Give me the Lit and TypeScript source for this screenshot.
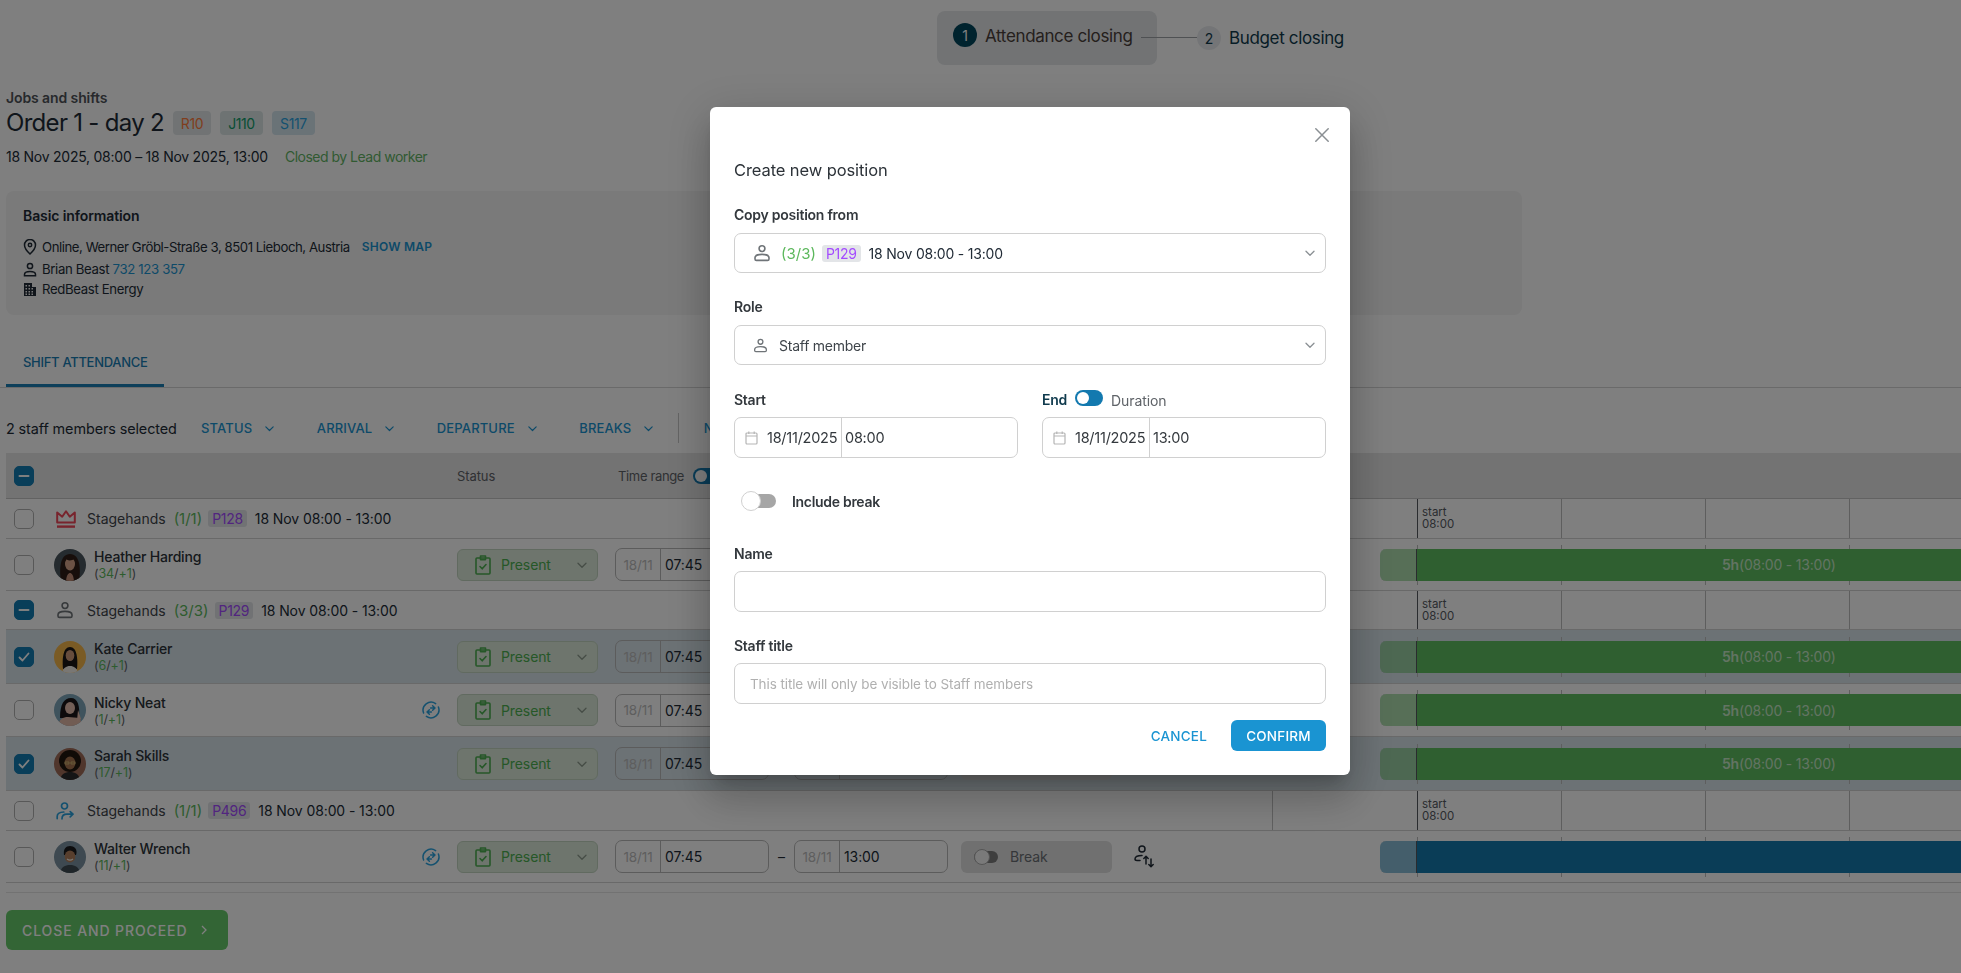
import { LitElement, html, svg, css, nothing } from 'lit';
import { customElement } from 'lit/decorators.js';
import { classMap } from 'lit/directives/class-map.js';

const chevron = (size = 12, color = 'currentColor') => html`
  <svg width=${size} height=${size} viewBox="0 0 12 12" fill="none" stroke=${color} stroke-width="1.3" stroke-linecap="round" stroke-linejoin="round"><path d="M2 4.2 6 8.2l4-4" /></svg>`;

const personIcon = (size = 18, color = '#6f7478') => html`
  <svg width=${size} height=${size} viewBox="0 0 18 18" fill="none" stroke=${color} stroke-width="1.6">
    <circle cx="9" cy="4.6" r="2.9" />
    <path d="M2 15v-1.2c0-2.2 3.2-3.4 7-3.4s7 1.2 7 3.4V15a1.4 1.4 0 0 1-1.4 1.4H3.4A1.4 1.4 0 0 1 2 15z" />
  </svg>`;

const crownIcon = () => html`
  <svg width="20" height="18" viewBox="0 0 20 18" fill="none" stroke="#f0485a" stroke-width="2" stroke-linejoin="round">
    <path d="M1.2 2.5V12.6h17.6V2.5l-5 4.2L10 1.2 6.200 6.700z" />
    <path d="M1 16.600h18" stroke-width="2.400" />
  </svg>`;

const assignedIcon = () => html`
  <svg width="18" height="18" viewBox="0 0 18 18" fill="none" stroke="#2aa3df" stroke-width="1.7" stroke-linecap="round" stroke-linejoin="round">
    <circle cx="8.5" cy="4" r="3" />
    <path d="M1.2 16.6v-2.4c0-2.6 2.6-4 6.6-4.2" />
    <path d="M6 16.8c0-3 2-4.6 5-4.6h5.6M14.2 9.6l2.8 2.6-2.8 2.6" />
  </svg>`;

const swapIcon = () => html`
  <svg width="18" height="18" viewBox="0 0 18 18" fill="none" stroke="#2aa3df" stroke-width="1.5" stroke-linecap="round" stroke-linejoin="round">
    <path d="M13.6 2.6A8 8 0 0 0 1.6 12M4.4 15.4a8 8 0 0 0 12-9.4" />
    <path d="M10.6 4.8 13 7l-2.4 2.2M13 7H8.6" />
    <path d="M7.4 8.8 5 11l2.4 2.2M5 11h4.4" />
  </svg>`;

const clipboardIcon = () => html`
  <svg width="16" height="20" viewBox="0 0 16 20" fill="none" stroke="#4caf50" stroke-width="1.6" stroke-linejoin="round" stroke-linecap="round">
    <rect x="1" y="3" width="14" height="16" rx="1" />
    <path d="M5.5 1h5v3.600h-5z" />
    <path d="m5 11.500 2.200 2.300L11 9.500" />
  </svg>`;

const calendarIcon = () => html`
  <svg width="13" height="14" viewBox="0 0 13 14" fill="none" stroke="#b5b5b5" stroke-width="1.2">
    <rect x="1" y="2" width="11" height="11" rx="1" />
    <path d="M1 5h11M3.8 .6v2.4M9.2 .6v2.4" />
  </svg>`;

const pinIcon = () => html`
  <svg width="14" height="16" viewBox="0 0 14 16" fill="none" stroke="#212b36" stroke-width="1.5">
    <path d="M7 15s5.5-5 5.5-9a5.500 5.500 0 0 0-11 0c0 4 5.500 9 5.500 9z" />
    <circle cx="7" cy="6" r="1.7" />
  </svg>`;

const contactIcon = () => html`
  <svg width="14" height="15" viewBox="0 0 14 15" fill="none" stroke="#212b36" stroke-width="1.5">
    <circle cx="7" cy="4" r="2.6" />
    <path d="M1.500 12.500c0-2 2.500-3 5.500-3s5.500 1 5.500 3v1.200h-11z" />
  </svg>`;

const buildingIcon = () => html`
  <svg width="14" height="14" viewBox="0 0 14 14" fill="#212b36">
    <path d="M1 1h8v4h4v9H1zM2.500 3v1.500H4V3zm3 0v1.500H7V3zm-3 3v1.500H4V6zm3 0v1.500H7V6zm3 0v1.500H10V6zm-6 3v1.500H4V9zm3 0v1.500H7V9zm3 0v1.500H10V9zm-6 2.500V13H4v-1.500zm3 0V13H7v-1.500zm3 0V13H10v-1.500z" fill-rule="evenodd" />
  </svg>`;

const moveIcon = () => html`
  <svg width="22" height="23" viewBox="0 0 22 23" fill="none" stroke="#212b36" stroke-width="1.5" stroke-linecap="round" stroke-linejoin="round">
    <circle cx="9" cy="4" r="3" />
    <path d="M9 10.500c-4.500 0-7 1-7 3.500 0 1.200.8 1.500 2 1.500h3" />
    <path d="M13 19v-7.500M10.800 13.500l2.200-2.200 2.200 2.200" />
    <path d="M18 14v7.500M15.800 19.500l2.200 2.200 2.200-2.200" />
  </svg>`;

const closeIcon = () => html`
  <svg width="14" height="14" viewBox="0 0 14 14" fill="none" stroke="#8a8f93" stroke-width="1.5" stroke-linecap="round"><path d="M.8.8l12.400 12.400M13.200.8.800 13.200" /></svg>`;

type AvatarKind = 'heather' | 'kate' | 'nicky' | 'sarah' | 'walter';

const avatar = (kind: AvatarKind) => {
  const parts = {
    heather: svg`
      <rect width="32" height="32" fill="#4a565e" />
      <path d="M7 32C5 20 6 5 16 5s11 15 9 27z" fill="#2e1d17" />
      <ellipse cx="16" cy="15" rx="5" ry="6.500" fill="#d8a58a" />
      <path d="M11 9c2 3 6 3 10 1l-1-3h-7z" fill="#2e1d17" />
      <path d="M12 32c.5-6 2.500-8 4-8s3.500 2 4 8z" fill="#c58f78" />`,
    kate: svg`
      <rect width="32" height="32" fill="#f4b64a" />
      <path d="M9 28c-1-10 0-22 7-22s8 12 7 22z" fill="#1b1614" />
      <ellipse cx="16" cy="14.500" rx="4.300" ry="5.500" fill="#cf9a7a" />
      <path d="M8 32c1-5 4-7 8-7s7 2 8 7z" fill="#f2efe9" />`,
    nicky: svg`
      <rect width="32" height="32" fill="#7ea6bb" />
      <path d="M6 24C6 10 10 4 17 4s9 8 8 20z" fill="#1a1517" />
      <ellipse cx="16" cy="14" rx="5" ry="6" fill="#e7bfae" />
      <path d="M4 32c1-7 5-9 10-9l12 1 2 8z" fill="#e3b8a6" />
      <path d="M24 16l3 9-4 2z" fill="#e7bfae" />`,
    sarah: svg`
      <rect width="32" height="32" fill="#a06c58" />
      <circle cx="16" cy="13" r="11" fill="#20160f" />
      <ellipse cx="16" cy="15" rx="5.500" ry="6.500" fill="#a5724f" />
      <path d="M11 14h4v2h-4zM17 14h4v2h-4z" fill="none" stroke="#d6c27a" stroke-width=".8" />
      <path d="M6 32c1-6 5-8 10-8s9 2 10 8z" fill="#2b2a2d" />`,
    walter: svg`
      <rect width="32" height="32" fill="#7c93a2" />
      <path d="M10 14c-1-6 2-9 6-9s8 3 6 9z" fill="#1b1a1d" />
      <ellipse cx="16" cy="15.500" rx="5.300" ry="6" fill="#b07f5d" />
      <path d="M13 18c2 1.500 4 1.500 6 0" stroke="#f5efe8" stroke-width="1.200" fill="none" />
      <path d="M6 32c1-6 5-8 10-8s9 2 10 8z" fill="#3e4a52" />`,
  };
  return html`<svg class="avatar" width="32" height="32" viewBox="0 0 32 32">${parts[kind]}</svg>`;
};

type Group = { type: 'group'; h: number; icon: 'crown' | 'person' | 'assigned'; count: string; code: string; check: string };
type Person = { type: 'person'; h: number; name: string; done: string; extra: string; av: AvatarKind; check: string; swap?: boolean; blue?: boolean };

const rows: (Group | Person)[] = [
  { type: 'group', h: 40, icon: 'crown', count: '(1/1)', code: 'P128', check: 'off' },
  { type: 'person', h: 52, name: 'Heather Harding', done: '34', extra: '+1', av: 'heather', check: 'off' },
  { type: 'group', h: 39, icon: 'person', count: '(3/3)', code: 'P129', check: 'some' },
  { type: 'person', h: 54, name: 'Kate Carrier', done: '6', extra: '+1', av: 'kate', check: 'on' },
  { type: 'person', h: 53, name: 'Nicky Neat', done: '1', extra: '+1', av: 'nicky', check: 'off', swap: true },
  { type: 'person', h: 54, name: 'Sarah Skills', done: '17', extra: '+1', av: 'sarah', check: 'on' },
  { type: 'group', h: 40, icon: 'assigned', count: '(1/1)', code: 'P496', check: 'off' },
  { type: 'person', h: 52, name: 'Walter Wrench', done: '11', extra: '+1', av: 'walter', check: 'off', swap: true, blue: true },
];

@customElement('app-root')
export class AppRoot extends LitElement {
  static styles = css`
    :host {
      display: block;
      height: 973px;
      overflow: hidden;
      background: #fff;
      color: #212b36;
      font-family: Inter, "Noto Sans", sans-serif;
      font-size: 14px;
      letter-spacing: -0.1px;
    }
    svg { flex: none; display: block; }

    .stepper { display: flex; align-items: flex-start; padding: 11px 0 0 937px; height: 54px; }
    .step-on {
      display: flex; align-items: flex-start; gap: 8px; width: 220px; height: 54px;
      padding: 12px 16px; box-sizing: border-box; border-radius: 8px; background: #e4e6e9;
    }
    .num {
      width: 24px; height: 24px; border-radius: 50%; flex: none;
      display: flex; align-items: center; justify-content: center; font-size: 14px;
    }
    .step-on .num { background: #00465c; color: #fff; }
    .step-label { font-size: 17px; line-height: 24px; letter-spacing: -0.35px; }
    .step-on .step-label { color: #4a3f3a; padding-top: 1px; }
    .step-line { width: 56px; height: 1px; background: #9ea3a7; margin: 26px 0 0 -16px; }
    .step-off { display: flex; align-items: center; gap: 8px; margin-top: 15px; }
    .step-off .num { background: #e9ebee; color: #0f3a4d; }
    .step-off .step-label { color: #0f3a4d; }

    .head { padding: 24px 0 0 6px; }
    .crumb { font-weight: 600; line-height: 18px; color: #4f5358; }
    .title-row { display: flex; align-items: center; height: 30px; margin-top: 1px; }
    .title { font-size: 24px; line-height: 30px; margin-right: 9px; letter-spacing: -0.7px; }
    .chip {
      display: flex; align-items: center; justify-content: center; height: 24px;
      border-radius: 4px; margin-right: 9px; font-size: 14px; background: #e6eced; letter-spacing: -0.4px;
    }
    .chip.r { width: 38px; color: #ff7c3c; background: #e2e7e9; }
    .chip.j { width: 43px; color: #0f9d6a; background: #dce7e7; }
    .chip.s { width: 43px; color: #2aa3df; background: #d5e6ef; }
    .dates { display: flex; line-height: 20px; margin-top: 9px; gap: 17px; font-size: 14px; letter-spacing: -0.25px; }
    .closed { color: #62b565; letter-spacing: -0.5px; }

    .info {
      margin: 24px 0 0 6px; width: 1516px; height: 124px; padding: 15px 17px 0; box-sizing: border-box;
      background: #f4f4f4; border-radius: 8px;
    }
    .info h3 { margin: 0 0 11px; font-size: 14px; line-height: 20px; font-weight: 600; color: #212b36; }
    .info-row { display: flex; align-items: center; gap: 5px; line-height: 20px; font-size: 13.2px; letter-spacing: -0.35px; }
    .info-row svg { width: 14px; }
    .info-row.first { margin-bottom: 2px; letter-spacing: -0.45px; }
    .link { color: #1a94d2; }
    .map { margin-left: 7px; font-size: 12px; font-weight: 600; letter-spacing: .25px; color: #1a94d2; }

    .tabs { margin: 22px 0 0 0; padding-left: 6px; height: 50px; border-bottom: 1px solid #d4d4d4; }
    .tab {
      display: flex; align-items: center; width: 158px; height: 50px; box-sizing: border-box;
      padding: 2px 0 0 17px; font-size: 13px; font-weight: 500; letter-spacing: -0.3px;
      color: #1a7fb5; border-bottom: 3px solid #1a7fb5;
    }

    .tools { display: flex; align-items: center; height: 30px; margin-top: 25px; padding-left: 6px; }
    .sel-count { width: 195px; font-size: 14.4px; letter-spacing: -0.1px; }
    .tool {
      display: flex; align-items: center; gap: 12px; margin-right: 41.5px;
      font-size: 13px; font-weight: 500; letter-spacing: .15px; color: #1a94d2;
    }
    .tools .bar { width: 1px; height: 30px; background: #c9c9c9; margin: 0 25px 0 -18px; }

    .table { margin: 10px 0 0 6px; }
    .row { display: grid; grid-template-columns: 48px 1218px 1fr; box-sizing: border-box; border-bottom: 1px solid #d2d2d2; }
    .row.hdr { height: 46px; background: #e6e6e6; border-bottom: 1px solid #c4c4c4; font-size: 13px; color: #5f6368; }
    .row.selected { background: #d8e4ea; }
    .check-cell { display: flex; align-items: center; padding-left: 8px; }
    .check {
      width: 20px; height: 20px; box-sizing: border-box; border-radius: 5px; border: 1px solid #b1b1b1;
      display: flex; align-items: center; justify-content: center; background: transparent;
    }
    .check.on, .check.some { background: #127cb2; border-color: #127cb2; }
    .mid { display: flex; align-items: center; }
    .hdr .status-h { margin-left: 403px; width: 161px; }
    .hdr .range-h { width: 75px; letter-spacing: -0.35px; }
    .toggle {
      position: relative; width: 28px; height: 16px; border-radius: 8px; background: #1379af; flex: none;
    }
    .toggle::after {
      content: ''; position: absolute; left: 2px; top: 2px; width: 12px; height: 12px;
      border-radius: 50%; background: #fff;
    }

    .g-icon { width: 31px; padding-left: 2px; display: flex; flex: none; }
    .g-name { font-size: 14px; letter-spacing: 0; color: #3e444a; }
    .mid.group { font-size: 14px; }
    .count { color: #5cb85c; margin-left: 8px; font-size: 15px; letter-spacing: 0; }
    .code {
      display: inline-flex; align-items: center; height: 17px; padding: 0 4px; border-radius: 3px;
      margin: 0 8px 0 6px; font-size: 14px; letter-spacing: -0.3px; color: #a44bff; background: #e3e5e8;
    }
    .when { color: #212b36; font-size: 14px; letter-spacing: -0.1px; }

    .who { display: flex; align-items: center; gap: 8px; width: 368px; flex: none; }
    .avatar { border-radius: 50%; }
    .who-name { font-size: 14px; font-weight: 500; line-height: 17px; color: #2c3238; letter-spacing: -0.2px; }
    .who-sub { font-size: 12.5px; line-height: 15px; margin-top: 1px; color: #5f6368; letter-spacing: -0.1px; }
    .who-sub b { font-weight: 400; color: #5cb85c; }
    .swap { width: 35px; flex: none; }
    .status {
      display: flex; align-items: center; width: 141px; height: 32px; box-sizing: border-box; flex: none;
      margin-right: 17px; padding: 0 9px 0 17px; gap: 10px; border-radius: 6px;
      background: #dcebda; border: 1px solid #c3d5c1; color: #4caf50; font-size: 14px;
    }
    .status span { flex: 1; }
    .time {
      display: flex; width: 154px; height: 33px; box-sizing: border-box; flex: none;
      border: 1px solid #b9b9b9; border-radius: 7px; font-size: 14px; align-items: stretch;
    }
    .time i { font-style: normal; width: 44px; display: flex; align-items: center; justify-content: center; color: #bcbcbc; border-right: 1px solid #b9b9b9; font-size: 13.5px; }
    .time b { font-weight: 400; display: flex; align-items: center; padding-left: 4px; }
    .dash { width: 25px; text-align: center; flex: none; }
    .brk {
      display: flex; align-items: center; width: 151px; height: 32px; box-sizing: border-box; margin-left: 13px; flex: none;
      padding-left: 13px; gap: 12px; background: #e0e0e0; border-radius: 6px; color: #6a6f74; font-size: 14px;
    }
    .toggle.small-off { width: 24px; background: #7d7d7d; height: 12px; border-radius: 6px; }
    .toggle.small-off::after {
      left: 0; top: -2px; width: 14px; height: 14px; background: #f4f4f4; border: 1px solid #a9a9a9;
    }
    .move { margin-left: 21px; flex: none; }

    .tl { position: relative; display: flex; padding-left: 144px; border-left: 1px solid #c0c0c0; overflow: hidden; }
    .tick { flex: none; width: 144px; box-sizing: border-box; border-left: 1px solid #bcbcbc; }
    .tick.start { border-left-color: #54595f; padding: 7px 0 0 4px; font-size: 11.5px; line-height: 12px; color: #54595f; letter-spacing: 0; }
    .tl.person { align-items: center; border-left: none; padding-left: 145px; }
    .tl.person .tick { height: 40px; }
    .bar-wrap { position: absolute; left: 108px; top: 50%; margin-top: -16px; right: 0; height: 32px; display: flex; }
    .pale { width: 37px; flex: none; background: rgba(94, 190, 96, .5); border-radius: 6px 0 0 6px; box-shadow: inset -1px 0 0 #54595f; }
    .solid { flex: 1; background: #5ebe60; padding-left: 305px; display: flex; align-items: center; color: #c6e8c7; font-size: 14px; letter-spacing: -0.2px; }
    .solid b { font-weight: 600; }
    .blue .pale { background: rgba(20, 122, 174, .5); }
    .blue .solid { background: #147aae; }

    .foot-line { margin: 9px 0 0 6px; border-top: 1px solid #e4e4e4; }
    .proceed {
      display: flex; align-items: center; margin: 17px 0 0 6px; width: 222px; height: 40px; box-sizing: border-box;
      padding-left: 16px; gap: 13px; border-radius: 6px; background: #67ca6a; color: #fff;
      font-size: 14px; font-weight: 500; letter-spacing: .9px;
    }

    .scrim {
      position: fixed; inset: 0; background: rgba(0, 0, 0, .5);
      display: flex; align-items: flex-start; padding: 107px 0 0 710px; box-sizing: border-box;
    }
    .modal {
      position: relative; width: 640px; height: 668px; box-sizing: border-box; padding: 51px 24px 24px;
      background: #fff; border-radius: 6px;
      box-shadow: 0 11px 15px -7px rgba(0,0,0,.2), 0 24px 38px 3px rgba(0,0,0,.14), 0 9px 46px 8px rgba(0,0,0,.12);
    }
    .close { position: absolute; right: 21px; top: 21px; }
    .modal h2 { margin: 0; font-size: 16.5px; line-height: 24px; font-weight: 400; color: #2c3238; letter-spacing: -0.1px; }
    .lab { font-size: 14px; font-weight: 600; line-height: 18px; color: #33383d; letter-spacing: -0.25px; }
    .select, .input {
      box-sizing: border-box; border: 1px solid #d0d0d0; border-radius: 7px; background: #fff; display: flex; align-items: center;
    }
    .select { height: 40px; margin-top: 9px; padding-right: 9px; }
    .m-copy { margin-top: 24px; }
    .m-role { margin-top: 25px; }
    .select .push { margin-left: auto; }
    .sel-a { padding-left: 18px; font-size: 14px; letter-spacing: -0.2px; }
    .sel-a .count { margin-left: 10px; }
    .sel-b { padding-left: 18px; font-size: 14px; gap: 11px; color: #3e444a; letter-spacing: -0.25px; }
    .two { display: grid; grid-template-columns: 284px 284px; gap: 0 24px; margin-top: 26px; }
    .end-lab { display: flex; gap: 8px; align-items: center; }
    .end-lab .lab { color: #0f3a4d; }
    .end-lab .toggle { margin-top: -4px; }
    .end-lab em { font-style: normal; color: #5f6368; font-size: 14px; letter-spacing: -0.1px; }
    .dt { height: 41px; margin-top: 8px; padding-left: 10px; font-size: 14.5px; letter-spacing: -0.25px; color: #33383d; align-items: stretch; }
    .dt svg { align-self: center; }
    .dt .d { display: flex; align-items: center; margin-left: 9px; width: 74px; border-right: 1px solid #d0d0d0; }
    .dt .t { display: flex; align-items: center; margin-left: 3px; }
    .incl { display: flex; align-items: center; height: 20px; margin: 33px 0 0 7px; gap: 16px; font-weight: 600; font-size: 14px; letter-spacing: -0.3px; color: #33383d; }
    .big-off { position: relative; width: 35px; height: 20px; flex: none; }
    .big-off::before { content: ''; position: absolute; left: 10px; right: 0; top: 3px; bottom: 3px; background: #a6a6a6; border-radius: 0 7px 7px 0; }
    .big-off::after { content: ''; position: absolute; left: 0; top: 0; width: 20px; height: 20px; box-sizing: border-box; border-radius: 50%; background: #fff; border: 1px solid #d0d0d0; }
    .m-name { margin-top: 34px; }
    .m-title { margin-top: 25px; }
    .input { height: 41px; margin-top: 8px; padding-left: 15px; font-size: 13.5px; color: #b0b0b0; letter-spacing: -0.1px; }
    .actions { display: flex; justify-content: flex-end; align-items: center; gap: 24px; margin-top: 16px; font-size: 13.5px; font-weight: 500; letter-spacing: .2px; }
    .cancel { color: #1a94d2; }
    .confirm {
      display: flex; align-items: center; justify-content: center; width: 95px; height: 31px;
      border-radius: 6px; background: #1a94d2; color: #fff;
    }
  `;

  private renderCheck(state: string) {
    const mark = state === 'on'
      ? html`<svg width="12" height="10" viewBox="0 0 12 10" fill="none" stroke="#fff" stroke-width="1.8" stroke-linecap="round" stroke-linejoin="round"><path d="M1.5 5.5 4.5 8.5 10.5 1.5" /></svg>`
      : state === 'some'
        ? html`<svg width="12" height="2" viewBox="0 0 12 2"><rect width="11" height="2" x=".5" rx="1" fill="#fff" /></svg>`
        : nothing;
    return html`<div class="check-cell"><div class=${classMap({ check: true, on: state === 'on', some: state === 'some' })}>${mark}</div></div>`;
  }

  private renderGroup(r: Group) {
    const icon = r.icon === 'crown' ? crownIcon() : r.icon === 'person' ? personIcon(18) : assignedIcon();
    return html`
      <div class="row" style="height:${r.h}px">
        ${this.renderCheck(r.check)}
        <div class="mid group">
          <span class="g-icon">${icon}</span>
          <span class="g-name">Stagehands</span>
          <span class="count">${r.count}</span>
          <span class="code">${r.code}</span>
          <span class="when">18 Nov 08:00 - 13:00</span>
        </div>
        <div class="tl">
          <div class="tick start">start<br />08:00</div>
          <div class="tick"></div><div class="tick"></div><div class="tick"></div><div class="tick"></div>
        </div>
      </div>`;
  }

  private renderPerson(r: Person) {
    return html`
      <div class=${classMap({ row: true, selected: r.check === 'on' })} style="height:${r.h}px">
        ${this.renderCheck(r.check)}
        <div class="mid">
          <div class="who">
            ${avatar(r.av)}
            <div>
              <div class="who-name">${r.name}</div>
              <div class="who-sub">(<b>${r.done}</b>/<b>${r.extra}</b>)</div>
            </div>
          </div>
          <div class="swap">${r.swap ? swapIcon() : nothing}</div>
          <div class="status">${clipboardIcon()}<span>Present</span>${chevron(12, '#8d9a8d')}</div>
          <div class="time"><i>18/11</i><b>07:45</b></div>
          <div class="dash">–</div>
          <div class="time"><i>18/11</i><b>13:00</b></div>
          <div class="brk"><div class="toggle small-off"></div>Break</div>
          <div class="move">${moveIcon()}</div>
        </div>
        <div class=${classMap({ tl: true, person: true, blue: !!r.blue })}>
          <div class="tick"></div><div class="tick"></div><div class="tick"></div><div class="tick"></div>
          <div class="bar-wrap">
            <div class="pale"></div>
            <div class="solid">${r.blue ? nothing : html`<b>5h</b>(08:00 - 13:00)`}</div>
          </div>
        </div>
      </div>`;
  }

  render() {
    return html`
      <div class="stepper">
        <div class="step-on"><span class="num">1</span><span class="step-label">Attendance closing</span></div>
        <div class="step-line"></div>
        <div class="step-off"><span class="num">2</span><span class="step-label">Budget closing</span></div>
      </div>

      <div class="head">
        <div class="crumb">Jobs and shifts</div>
        <div class="title-row">
          <div class="title">Order 1 - day 2</div>
          <div class="chip r">R10</div><div class="chip j">J110</div><div class="chip s">S117</div>
        </div>
        <div class="dates"><span>18 Nov 2025, 08:00 – 18 Nov 2025, 13:00</span><span class="closed">Closed by Lead worker</span></div>
      </div>

      <div class="info">
        <h3>Basic information</h3>
        <div class="info-row first">${pinIcon()}<span>Online, Werner Gröbl-Straße 3, 8501 Lieboch, Austria</span><span class="map">SHOW MAP</span></div>
        <div class="info-row">${contactIcon()}<span>Brian Beast <span class="link">732 123 357</span></span></div>
        <div class="info-row">${buildingIcon()}<span>RedBeast Energy</span></div>
      </div>

      <div class="tabs"><div class="tab">SHIFT ATTENDANCE</div></div>

      <div class="tools">
        <div class="sel-count">2 staff members selected</div>
        <div class="tool">STATUS ${chevron(11)}</div>
        <div class="tool">ARRIVAL ${chevron(11)}</div>
        <div class="tool">DEPARTURE ${chevron(11)}</div>
        <div class="tool">BREAKS ${chevron(11)}</div>
        <div class="bar"></div>
        <div class="tool">NOTES</div>
      </div>

      <div class="table">
        <div class="row hdr">
          ${this.renderCheck('some')}
          <div class="mid">
            <span class="status-h">Status</span>
            <span class="range-h">Time range</span>
            <div class="toggle"></div>
          </div>
          <div></div>
        </div>
        ${rows.map((r) => (r.type === 'group' ? this.renderGroup(r) : this.renderPerson(r)))}
      </div>
      <div class="foot-line"></div>
      <div class="proceed">CLOSE AND PROCEED <svg width="8" height="12" viewBox="0 0 8 12" fill="none" stroke="#fff" stroke-width="1.3"><path d="m2 2 4 4-4 4" /></svg></div>

      <div class="scrim">
        <div class="modal">
          <div class="close">${closeIcon()}</div>
          <h2>Create new position</h2>
          <div class="lab m-copy">Copy position from</div>
          <div class="select sel-a">
            ${personIcon(18)}
            <span class="count">(3/3)</span>
            <span class="code">P129</span>
            <span>18 Nov 08:00 - 13:00</span>
            <span class="push">${chevron(12, '#8a8f93')}</span>
          </div>
          <div class="lab m-role">Role</div>
          <div class="select sel-b">
            ${personIcon(15)}
            <span>Staff member</span>
            <span class="push">${chevron(12, '#8a8f93')}</span>
          </div>
          <div class="two">
            <div>
              <div class="lab">Start</div>
              <div class="select dt">${calendarIcon()}<span class="d">18/11/2025</span><span class="t">08:00</span></div>
            </div>
            <div>
              <div class="end-lab"><span class="lab">End</span><div class="toggle"></div><em>Duration</em></div>
              <div class="select dt">${calendarIcon()}<span class="d">18/11/2025</span><span class="t">13:00</span></div>
            </div>
          </div>
          <div class="incl"><div class="big-off"></div>Include break</div>
          <div class="lab m-name">Name</div>
          <div class="input"></div>
          <div class="lab m-title">Staff title</div>
          <div class="input">This title will only be visible to Staff members</div>
          <div class="actions"><span class="cancel">CANCEL</span><span class="confirm">CONFIRM</span></div>
        </div>
      </div>
    `;
  }
}

declare global {
  interface HTMLElementTagNameMap {
    'app-root': AppRoot;
  }
}
